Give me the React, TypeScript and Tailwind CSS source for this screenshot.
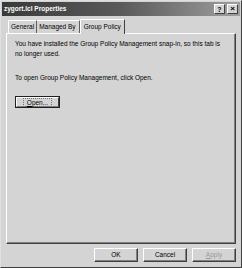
import React from "react";

const Btn = ({ children, disabled }: { children: React.ReactNode; disabled?: boolean }) => (
  <div className={`w-[44px] h-[14px] border border-t-white border-l-white border-r-[#404040] border-b-[#404040] shadow-[inset_-1px_-1px_0_#808080] flex items-center justify-center text-[6.5px] ${disabled ? "text-[#9a9a9a]" : "text-black"}`}>
    {children}
  </div>
);

export default function App() {
  return (
    <div className="w-[242px] h-[268px] bg-[#d4d4d4] flex flex-col border border-t-[#e0e0e0] border-l-[#e0e0e0] border-r-[#404040] border-b-[#404040] overflow-hidden" style={{ fontFamily: "'Liberation Sans', Arial, sans-serif" }}>
      <div className="h-[14px] mx-[1px] mt-[1px] bg-gradient-to-r from-[#3a3a3a] via-[#5a5a5a] to-[#a0a0a0] flex items-center justify-between pl-[2px] pr-[2px]">
        <span className="text-white font-bold text-[6.5px] leading-none">zygort.lcl Properties</span>
        <div className="flex gap-[2px]">
          <div className="w-[11px] h-[10px] bg-[#d4d4d4] border border-t-white border-l-white border-r-[#404040] border-b-[#404040] flex items-center justify-center text-[7px] font-bold leading-none">?</div>
          <div className="w-[11px] h-[10px] bg-[#d4d4d4] border border-t-white border-l-white border-r-[#404040] border-b-[#404040] flex items-center justify-center text-[8px] font-bold leading-none">×</div>
        </div>
      </div>
      <div className="flex items-end pl-[7px] mt-[2px] h-[15px]">
        <div className="h-[13px] pl-[2px] pr-[2px] border-t border-l border-t-white border-l-white border-r border-r-[#606060] text-[6.5px] leading-[12px]">General</div>
        <div className="h-[13px] pl-[2px] pr-[3px] border-t border-t-white border-r border-r-[#606060] text-[6.5px] leading-[12px]">Managed By</div>
        <div className="h-[15px] px-[3px] -mb-[1px] relative z-10 bg-[#d4d4d4] border-t border-l border-t-white border-l-white border-r border-r-[#404040] text-[6.5px] leading-[13px]">Group Policy</div>
      </div>
      <div className="mx-[5px] h-[211px] border border-t-white border-l-white border-r-[#404040] border-b-[#404040] shadow-[inset_-1px_-1px_0_#808080] pl-[8px] pr-[6px] pt-[5px] text-[6.5px] leading-[10px]">
        <p>You have installed the Group Policy Management snap-in, so this tab is no longer used.</p>
        <p className="mt-[14px]">To open Group Policy Management, click Open.</p>
        <div className="mt-[13px] w-[45px] h-[12px] border border-[#202020]">
          <div className="w-full h-full border border-t-white border-l-white border-r-[#404040] border-b-[#808080] flex items-center justify-center">
            <span className="border border-dotted border-[#707070] px-[3px] leading-[7px] text-[6.5px]"><u>O</u>pen...</span>
          </div>
        </div>
      </div>
      <div className="flex justify-end gap-[5px] pr-[5px] mt-[4px]">
        <Btn>OK</Btn>
        <Btn>Cancel</Btn>
        <Btn disabled><u>A</u>pply</Btn>
      </div>
    </div>
  );
}
